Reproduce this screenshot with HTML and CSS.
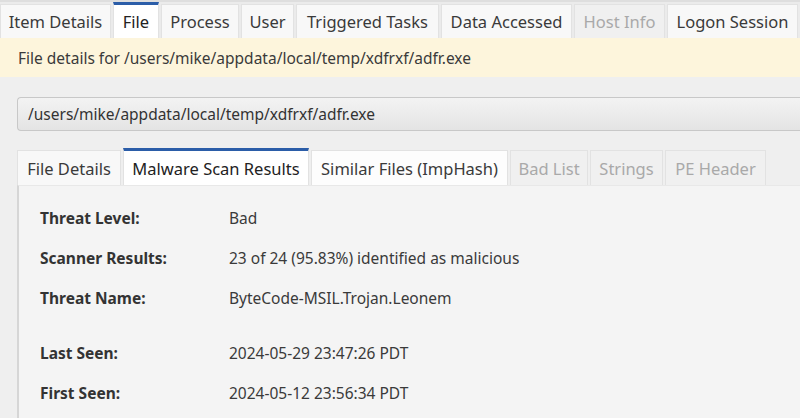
FILE: index.html
```html
<!DOCTYPE html>
<html>
<head>
<meta charset="utf-8">
<link rel="stylesheet" href="styles.css">
</head>
<body>
<div class="tabs top-tabs">
  <div class="tab">Item Details</div>
  <div class="tab active">File</div>
  <div class="tab">Process</div>
  <div class="tab">User</div>
  <div class="tab">Triggered Tasks</div>
  <div class="tab">Data Accessed</div>
  <div class="tab disabled">Host Info</div>
  <div class="tab">Logon Session</div>
</div>
<div class="banner">File details for /users/mike/appdata/local/temp/xdfrxf/adfr.exe</div>
<div class="main">
  <div class="pathbox">/users/mike/appdata/local/temp/xdfrxf/adfr.exe</div>
  <div class="tabs sub-tabs">
    <div class="tab">File Details</div>
    <div class="tab active">Malware Scan Results</div>
    <div class="tab light">Similar Files (ImpHash)</div>
    <div class="tab disabled">Bad List</div>
    <div class="tab disabled">Strings</div>
    <div class="tab disabled">PE Header</div>
  </div>
  <div class="panel">
    <div class="row"><div class="label">Threat Level:</div><div class="value">Bad</div></div>
    <div class="row"><div class="label">Scanner Results:</div><div class="value">23 of 24 (95.83%) identified as malicious</div></div>
    <div class="row"><div class="label">Threat Name:</div><div class="value">ByteCode-MSIL.Trojan.Leonem</div></div>
    <div class="row spaced"><div class="label">Last Seen:</div><div class="value">2024-05-29 23:47:26 PDT</div></div>
    <div class="row"><div class="label">First Seen:</div><div class="value">2024-05-12 23:56:34 PDT</div></div>
  </div>
</div>
</body>
</html>
```
FILE: styles.css
```css
* { box-sizing: border-box; }
html, body { margin: 0; padding: 0; }
body {
  width: 800px;
  height: 418px;
  overflow: hidden;
  background: #efefef;
  font-family: "Noto Sans", "Open Sans", sans-serif;
  color: #333;
}
.tabs {
  display: flex;
  gap: 2px;
  white-space: nowrap;
}
.top-tabs {
  background: #ebebeb;
  border-top: 2px solid #dedede;
  padding-top: 2px;
  height: 38px;
  font-size: 16.5px;
}
.tab {
  flex: none;
  background: #f8f8f8;
  border: 1px solid #e2e2e2;
  border-bottom: none;
  display: flex;
  align-items: center;
  justify-content: center;
  color: #3a3a3a;
}
.top-tabs .tab { height: 34px; }
.top-tabs .tab:nth-child(1) { width: 111px; }
.top-tabs .tab:nth-child(2) { width: 46px; }
.top-tabs .tab:nth-child(3) { width: 78px; }
.top-tabs .tab:nth-child(4) { width: 53px; }
.top-tabs .tab:nth-child(5) { width: 143px; }
.top-tabs .tab:nth-child(6) { width: 131px; }
.top-tabs .tab:nth-child(7) { width: 91px; }
.top-tabs .tab:nth-child(8) { width: 131px; }
.tab.active {
  background: #fff;
  border-top: 3px solid #2b5da8;
  color: #222;
}
.top-tabs .tab.active { margin-top: -2px; height: 36px; }
.tab.disabled {
  background: #f0f0f0;
  color: #a9a9a9;
}
.tab.light { background: #fdfdfd; }
.banner {
  background: #fdf5dc;
  height: 39px;
  padding: 0 18px;
  display: flex;
  align-items: center;
  font-size: 15.5px;
  color: #3a3a3a;
}
.main {
  padding: 20px 0 0 17px;
}
.pathbox {
  height: 34px;
  border: 1px solid #c8c8c8;
  border-right: none;
  border-radius: 4px 0 0 4px;
  background: linear-gradient(#f3f3f3, #e4e4e4);
  display: flex;
  align-items: center;
  padding-left: 10px;
  font-size: 15.5px;
  color: #333;
}
.sub-tabs {
  margin-top: 17px;
  height: 37px;
  font-size: 16.5px;
  align-items: flex-end;
}
.sub-tabs .tab { height: 35px; }
.sub-tabs .tab.active { height: 37px; }
.sub-tabs .tab:nth-child(1) { width: 104px; }
.sub-tabs .tab:nth-child(2) { width: 186px; }
.sub-tabs .tab:nth-child(3) { width: 197px; }
.sub-tabs .tab:nth-child(4) { width: 78px; }
.sub-tabs .tab:nth-child(5) { width: 73px; }
.sub-tabs .tab:nth-child(6) { width: 101px; }
.panel {
  background: #f4f4f4;
  border-left: 2px solid #d6d6d6;
  border-top: 1px solid #e8e8e8;
  padding: 12px 0 0 21px;
  height: 240px;
  font-size: 15.5px;
}
.row {
  display: flex;
  height: 40px;
  align-items: center;
}
.row.spaced { margin-top: 15px; }
.label {
  width: 189px;
  font-weight: bold;
  color: #333;
}
.value { color: #3a3a3a; }
```
